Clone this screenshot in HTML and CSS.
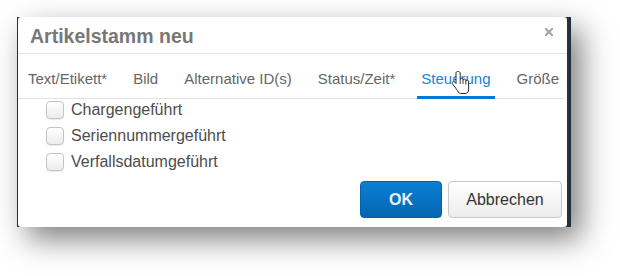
FILE: index.html
```html
<!DOCTYPE html>
<html lang="de">
<head>
<meta charset="utf-8">
<title>Artikelstamm neu</title>
<link rel="stylesheet" href="styles.css">
</head>
<body>
<div class="frame">
  <div class="dialog">
    <div class="header">
      <div class="title">Artikelstamm neu</div>
      <svg class="close" width="8" height="8" viewBox="0 0 8 8"><path d="M0.8 0.8 L7.2 7.2 M7.2 0.8 L0.8 7.2" stroke="#a3a3a3" stroke-width="2" stroke-linecap="square"/></svg>
    </div>
    <div class="tabs">
      <div class="tab">Text/Etikett*</div>
      <div class="tab">Bild</div>
      <div class="tab">Alternative ID(s)</div>
      <div class="tab">Status/Zeit*</div>
      <div class="tab active">Steuerung</div>
      <div class="tab">Größe</div>
    </div>
    <div class="list">
      <label class="row"><span class="box"></span>Chargengeführt</label>
      <label class="row"><span class="box"></span>Seriennummergeführt</label>
      <label class="row"><span class="box"></span>Verfallsdatumgeführt</label>
    </div>
    <div class="footer">
      <button class="btn ok">OK</button>
      <button class="btn cancel">Abbrechen</button>
    </div>
  </div>
</div>
<svg class="cursor" width="18" height="24" viewBox="0 0 18 24">
  <path d="M5.5 0.5 C4.7 0.5 4 1.2 4 2 V12.5 L2.7 11.1 C2.1 10.5 1.1 10.5 0.6 11.1 C0.1 11.6 0.1 12.4 0.6 13 L4.6 18.3 C5.6 19.6 6.4 22.5 8.6 22.5 H13 C15 22.5 16.6 20.9 16.6 18.9 V10.4 C16.6 9.6 16 9 15.2 9 S13.8 9.6 13.8 10.4 V9.4 C13.8 8.6 13.2 8 12.4 8 S11 8.6 11 9.4 V8.6 C11 7.8 10.4 7.2 9.6 7.2 S8.2 7.8 8.2 8.6 V2 C8.2 1.2 7.3 0.5 6.5 0.5 Z" fill="#fff" stroke="#2b2b2b" stroke-width="1" stroke-linejoin="round"/>
  <path d="M8.2 8.6 V13 M11 9.4 V13 M13.8 10.4 V13.5" stroke="#2b2b2b" stroke-width="0.9" fill="none"/>
</svg>
</body>
</html>
```
FILE: styles.css
```css
html, body {
  margin: 0;
  padding: 0;
  background: #ffffff;
}
body {
  width: 620px;
  height: 276px;
  overflow: hidden;
  font-family: "Liberation Sans", Arial, sans-serif;
  position: relative;
}
.frame {
  margin: 17px 0 0 17px;
  width: 549px;
  height: 210px;
  padding: 0 4px 0 1px;
  background: #25303b;
  box-shadow: 10px 12px 28px rgba(0, 0, 0, 0.5);
}
.dialog {
  height: 100%;
  background: #ffffff;
  border-radius: 3px;
  display: flex;
  flex-direction: column;
}
.header {
  display: flex;
  justify-content: space-between;
  align-items: flex-start;
  height: 36px;
  border-bottom: 1px solid #e5e5e5;
  padding: 0 14px 0 12px;
}
.title {
  font-size: 19.5px;
  font-weight: bold;
  color: #777777;
  padding-top: 2px;
  line-height: 34px;
}
.close {
  margin-top: 11px;
}
.tabs {
  display: flex;
  gap: 18px;
  padding-left: 6px;
  margin-right: 3px;
  height: 44px;
  border-bottom: 1px solid #e2e2e2;
}
.tab {
  font-size: 15px;
  line-height: 18px;
  color: #666666;
  padding: 16px 4px 8px;
  border-bottom: 3px solid transparent;
  margin-bottom: -1px;
  white-space: nowrap;
}
.tab.active {
  color: #1a82d8;
  border-bottom-color: #0a78cf;
}
.list {
  display: flex;
  flex-direction: column;
  gap: 4px;
  padding-left: 28px;
}
.row {
  display: flex;
  align-items: center;
  height: 22px;
  font-size: 16px;
  color: #4d4d4d;
}
.box {
  width: 16px;
  height: 16px;
  border: 1px solid #c4c4c4;
  border-radius: 4px;
  background: linear-gradient(#ffffff, #ececec);
  box-shadow: 0 1px 1px rgba(0, 0, 0, 0.08);
  margin-right: 7px;
}
.footer {
  margin-top: auto;
  display: flex;
  justify-content: flex-end;
  gap: 6px;
  padding: 0 5px 9px 0;
}
.btn {
  height: 37px;
  border-radius: 4px;
  font-family: "Liberation Sans", Arial, sans-serif;
  font-size: 16px;
  padding: 0;
  cursor: pointer;
}
.ok {
  width: 82px;
  font-weight: bold;
  color: #e9f1f9;
  background: linear-gradient(#0b7ed3, #0566b2);
  border: 1px solid #0760a8;
}
.cancel {
  width: 114px;
  color: #333333;
  background: linear-gradient(#ffffff, #ececec);
  border: 1px solid #c8c8c8;
}
.cursor {
  position: absolute;
  left: 452px;
  top: 71px;
}
```
